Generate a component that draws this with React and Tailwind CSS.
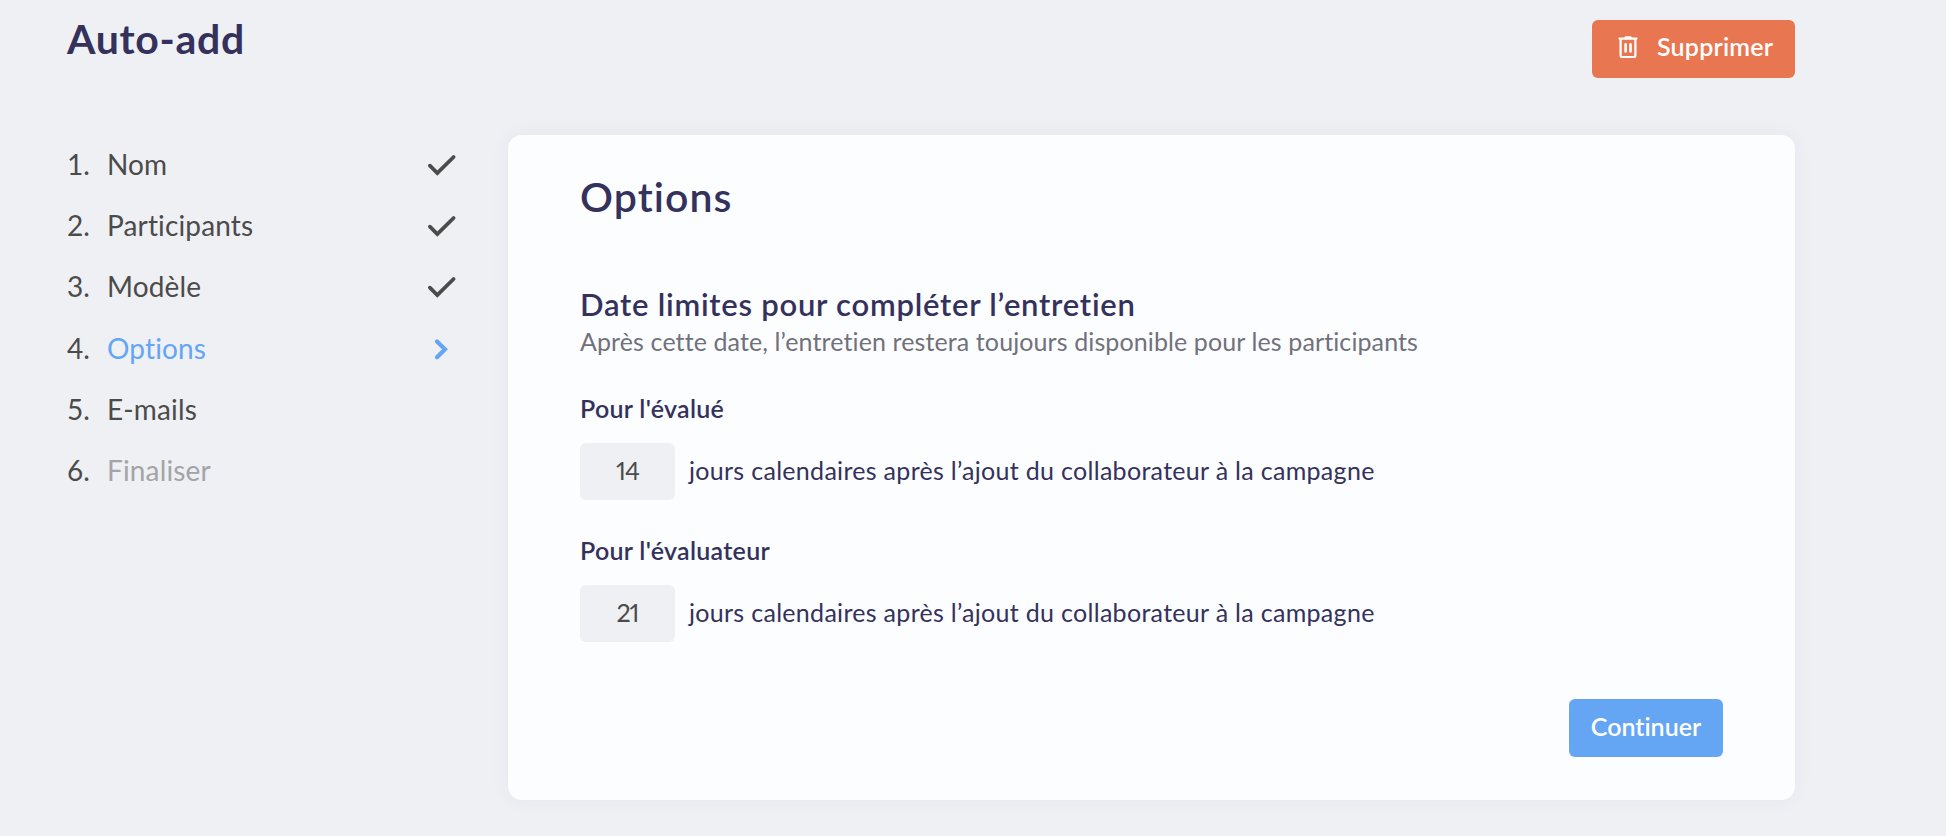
const STEPS = [
  { label: 'Nom', status: 'done' },
  { label: 'Participants', status: 'done' },
  { label: 'Modèle', status: 'done' },
  { label: 'Options', status: 'current' },
  { label: 'E-mails', status: 'todo' },
  { label: 'Finaliser', status: 'disabled' },
];

const LABEL_COLORS = {
  done: 'text-[#4b4b4b]',
  current: 'text-[#64a5f4]',
  todo: 'text-[#4b4b4b]',
  disabled: 'text-[#a3a4a8]',
};

function CheckIcon() {
  return (
    <svg className="w-8 h-8 text-[#4b4b4b]" viewBox="0 0 32 32" fill="none" stroke="currentColor" strokeWidth={3.8}>
      <path strokeLinecap="round" d="M3.9 18.7l7.4 7.4L27.6 10" />
    </svg>
  );
}

function ChevronIcon() {
  return (
    <svg className="w-8 h-8 text-[#64a5f4]" viewBox="0 0 32 32" fill="none" stroke="currentColor" strokeWidth={4.2}>
      <path strokeLinecap="round" d="M11 10.5l8 7.8-8 8" />
    </svg>
  );
}

function TrashIcon() {
  return (
    <svg className="w-5 h-6" viewBox="0 0 20 24" fill="none" stroke="currentColor" strokeWidth={2.2}>
      <path strokeLinecap="round" d="M1.5 3.6h17" />
      <path strokeLinecap="round" strokeWidth={2.6} d="M7.8 2.5h4.6" />
      <path strokeLinejoin="round" d="M2.6 4v16.2q0 1.8 1.8 1.8h11.2q1.8 0 1.8-1.8V4" />
      <path strokeLinecap="round" strokeWidth={2.6} d="M7.6 9.4v7M12.5 9.4v7" />
    </svg>
  );
}

function Step({ index, label, status }) {
  return (
    <li className="flex items-center h-[61.3px] text-[28px]">
      <span className="w-[40px] pt-[2px] text-[#4b4b4b]">{index}.</span>
      <span className={`flex-1 pt-[2px] tracking-[0.15px] ${LABEL_COLORS[status]}`}>{label}</span>
      {status === 'done' && <CheckIcon />}
      {status === 'current' && <ChevronIcon />}
    </li>
  );
}

function DelayField({ title, value, className }) {
  return (
    <div className={className}>
      <h3 className="text-[25px] leading-[30px] font-semibold tracking-[0.3px]">{title}</h3>
      <div className="mt-[20px] flex items-center gap-[14px] text-[25px]">
        <input
          defaultValue={value}
          className="w-[95px] h-[57px] pb-[4px] rounded-md bg-[#eff0f4] text-center text-[#4b4b4b] proportional-nums tracking-[-1px] outline-none"
        />
        <span className="pb-[2px] tracking-[0.3px]">jours calendaires après l’ajout du collaborateur à la campagne</span>
      </div>
    </div>
  );
}

export default function App() {
  return (
    <div className="h-[836px] overflow-hidden bg-[#eff0f4] pl-[67px] pr-[151px] font-['Lato','Liberation_Sans',sans-serif] [font-variant-ligatures:none] text-[#34325c]">
      <header className="flex items-start justify-between h-[132px] pt-[15px]">
        <h1 className="text-[41px] leading-[48px] font-bold tracking-[0.7px]">Auto-add</h1>
        <button className="mt-[5px] flex items-center w-[203px] h-[58px] pl-[26px] pb-[4px] gap-[19px] rounded-md bg-[#e87650] text-white text-[25px] font-semibold tracking-[0.2px]">
          <TrashIcon />
          Supprimer
        </button>
      </header>

      <div className="flex justify-between">
        <ol className="w-[391px]">
          {STEPS.map((s, i) => (
            <Step key={s.label} index={i + 1} label={s.label} status={s.status} />
          ))}
        </ol>

        <main className="mt-[3px] w-[1287px] h-[665px] pl-[72px] pr-[72px] pt-[38px] rounded-[14px] bg-[#fcfdff] shadow-[0_0_20px_rgba(52,50,92,0.05)]">
          <h2 className="text-[41px] leading-[48px] font-semibold tracking-[1.1px]">Options</h2>

          <h3 className="mt-[65px] text-[31px] leading-[36px] font-semibold tracking-[0.75px]">Date limites pour compléter l’entretien</h3>
          <p className="mt-[4px] text-[25px] leading-[30px] tracking-[0.11px] text-[#71717b]">
            Après cette date, l’entretien restera toujours disponible pour les participants
          </p>

          <DelayField title="Pour l'évalué" value="14" className="mt-[37px]" />
          <DelayField title="Pour l'évaluateur" value="21" className="mt-[35px]" />

          <div className="mt-[57px] flex justify-end">
            <button className="w-[154px] h-[58px] pb-[3px] rounded-md bg-[#64a5f4] text-white text-[25px] font-semibold">
              Continuer
            </button>
          </div>
        </main>
      </div>
    </div>
  );
}
